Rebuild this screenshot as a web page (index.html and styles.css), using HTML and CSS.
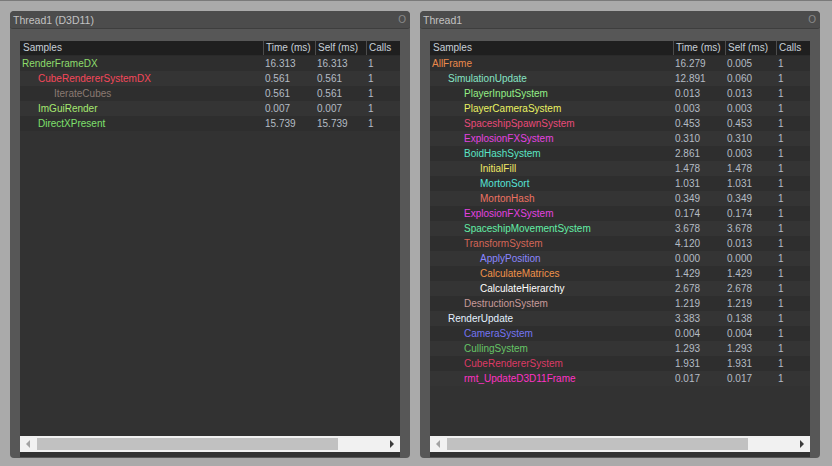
FILE: index.html
```html
<!DOCTYPE html>
<html>
<head>
<meta charset="utf-8">
<link rel="stylesheet" href="styles.css">
</head>
<body>
<div class="desk">
  <section class="panel">
    <div class="titlebar"><span>Thread1 (D3D11)</span><span class="close">O</span></div>
    <div class="content">
      <div class="box">
        <div class="row head"><div>Samples</div><div>Time (ms)</div><div>Self (ms)</div><div>Calls</div></div>
        <div class="rows">
          <div class="row"><div class="n l0" style="color:#8ddc6c">RenderFrameDX</div><div>16.313</div><div>16.313</div><div>1</div></div>
          <div class="row"><div class="n l1" style="color:#f4475a">CubeRendererSystemDX</div><div>0.561</div><div>0.561</div><div>1</div></div>
          <div class="row"><div class="n l2" style="color:#8a7a72">IterateCubes</div><div>0.561</div><div>0.561</div><div>1</div></div>
          <div class="row"><div class="n l1" style="color:#a6e870">ImGuiRender</div><div>0.007</div><div>0.007</div><div>1</div></div>
          <div class="row"><div class="n l1" style="color:#7ee06c">DirectXPresent</div><div>15.739</div><div>15.739</div><div>1</div></div>
        </div>
        <div class="hscroll"><span class="arr left"></span><span class="thumb"></span><span class="arr right"></span></div>
        <div class="foot"></div>
      </div>
    </div>
  </section>
  <section class="panel">
    <div class="titlebar"><span>Thread1</span><span class="close">O</span></div>
    <div class="content">
      <div class="box">
        <div class="row head"><div>Samples</div><div>Time (ms)</div><div>Self (ms)</div><div>Calls</div></div>
        <div class="rows">
          <div class="row"><div class="n l0" style="color:#ea8a4c">AllFrame</div><div>16.279</div><div>0.005</div><div>1</div></div>
          <div class="row"><div class="n l1" style="color:#86e4c4">SimulationUpdate</div><div>12.891</div><div>0.060</div><div>1</div></div>
          <div class="row"><div class="n l2" style="color:#94ee86">PlayerInputSystem</div><div>0.013</div><div>0.013</div><div>1</div></div>
          <div class="row"><div class="n l2" style="color:#eaf262">PlayerCameraSystem</div><div>0.003</div><div>0.003</div><div>1</div></div>
          <div class="row"><div class="n l2" style="color:#e84a7a">SpaceshipSpawnSystem</div><div>0.453</div><div>0.453</div><div>1</div></div>
          <div class="row"><div class="n l2" style="color:#e442e0">ExplosionFXSystem</div><div>0.310</div><div>0.310</div><div>1</div></div>
          <div class="row"><div class="n l2" style="color:#5ae4c4">BoidHashSystem</div><div>2.861</div><div>0.003</div><div>1</div></div>
          <div class="row"><div class="n l3" style="color:#f0e864">InitialFill</div><div>1.478</div><div>1.478</div><div>1</div></div>
          <div class="row"><div class="n l3" style="color:#56e2d6">MortonSort</div><div>1.031</div><div>1.031</div><div>1</div></div>
          <div class="row"><div class="n l3" style="color:#ee7262">MortonHash</div><div>0.349</div><div>0.349</div><div>1</div></div>
          <div class="row"><div class="n l2" style="color:#e442e0">ExplosionFXSystem</div><div>0.174</div><div>0.174</div><div>1</div></div>
          <div class="row"><div class="n l2" style="color:#62eea6">SpaceshipMovementSystem</div><div>3.678</div><div>3.678</div><div>1</div></div>
          <div class="row"><div class="n l2" style="color:#d46658">TransformSystem</div><div>4.120</div><div>0.013</div><div>1</div></div>
          <div class="row"><div class="n l3" style="color:#8a86ff">ApplyPosition</div><div>0.000</div><div>0.000</div><div>1</div></div>
          <div class="row"><div class="n l3" style="color:#f0924a">CalculateMatrices</div><div>1.429</div><div>1.429</div><div>1</div></div>
          <div class="row"><div class="n l3" style="color:#ffffff">CalculateHierarchy</div><div>2.678</div><div>2.678</div><div>1</div></div>
          <div class="row"><div class="n l2" style="color:#c89a9a">DestructionSystem</div><div>1.219</div><div>1.219</div><div>1</div></div>
          <div class="row"><div class="n l1" style="color:#e4f2ff">RenderUpdate</div><div>3.383</div><div>0.138</div><div>1</div></div>
          <div class="row"><div class="n l2" style="color:#7474f2">CameraSystem</div><div>0.004</div><div>0.004</div><div>1</div></div>
          <div class="row"><div class="n l2" style="color:#66c466">CullingSystem</div><div>1.293</div><div>1.293</div><div>1</div></div>
          <div class="row"><div class="n l2" style="color:#dc3a66">CubeRendererSystem</div><div>1.931</div><div>1.931</div><div>1</div></div>
          <div class="row"><div class="n l2" style="color:#ff32c4">rmt_UpdateD3D11Frame</div><div>0.017</div><div>0.017</div><div>1</div></div>
        </div>
        <div class="hscroll"><span class="arr left"></span><span class="thumb"></span><span class="arr right"></span></div>
        <div class="foot"></div>
      </div>
    </div>
  </section>
</div>
</body>
</html>
```

FILE: styles.css
```css
html, body {
  margin: 0;
  padding: 0;
}
body {
  width: 832px;
  height: 466px;
  background: #aaaaaa;
  font-family: "Liberation Sans", Arial, sans-serif;
  font-size: 10px;
  overflow: hidden;
}
.desk {
  box-sizing: border-box;
  height: 466px;
  border-top: 1px solid #7a7a7a;
  padding: 10px 12px 8px 10px;
  display: flex;
  gap: 10px;
}
.panel {
  width: 400px;
  display: flex;
  flex-direction: column;
  background: #575757;
  border-radius: 4px;
  overflow: hidden;
}
.titlebar {
  height: 17px;
  flex: 0 0 17px;
  background: #4c4c4c;
  border-bottom: 1px solid #3e3e3e;
  border-radius: 4px 4px 3px 3px;
  display: flex;
  align-items: center;
  justify-content: space-between;
  padding: 0 4px 0 3px;
  color: #c2c2c2;
  font-size: 10.5px;
}
.close {
  color: #8a8a8a;
  font-size: 10px;
}
.content {
  flex: 1;
  display: flex;
  padding: 12px 10px 1px 10px;
}
.box {
  flex: 1;
  display: flex;
  flex-direction: column;
  background: #323232;
}
.row {
  display: grid;
  grid-template-columns: 243px 52px 51px 1fr;
  height: 15px;
  align-items: center;
  color: #b4bcc4;
}
.row > div {
  padding-left: 2px;
  white-space: nowrap;
}
.row.head {
  height: 14px;
  background: #1f1f1f;
  color: #c8d0d8;
  border-bottom: 1px solid #2a2a2a;
}
.row.head > div {
  height: 14px;
  line-height: 14px;
  border-left: 1px solid #4c4c4c;
}
.row.head > div:first-child {
  border-left: none;
  padding-left: 3px;
}
.rows {
  flex: 1;
}
.rows .row:nth-child(odd) {
  background: #2e2e2e;
}
.rows .row:nth-child(even) {
  background: #343434;
}
.n.l0 { padding-left: 2px; }
.n.l1 { padding-left: 18px; }
.n.l2 { padding-left: 34px; }
.n.l3 { padding-left: 50px; }
.hscroll {
  height: 16px;
  flex: 0 0 16px;
  background: #f1f1f1;
  display: flex;
  align-items: center;
  padding: 0 6px 0 6px;
}
.thumb {
  height: 12px;
  width: 301px;
  background: #c1c1c1;
  margin-left: 7px;
}
.arr {
  width: 0;
  height: 0;
  border-top: 4px solid transparent;
  border-bottom: 4px solid transparent;
}
.arr.left {
  border-right: 4px solid #a3a3a3;
}
.arr.right {
  border-left: 4px solid #3c3c3c;
  margin-left: auto;
}
.foot {
  height: 5px;
  flex: 0 0 5px;
}
```
